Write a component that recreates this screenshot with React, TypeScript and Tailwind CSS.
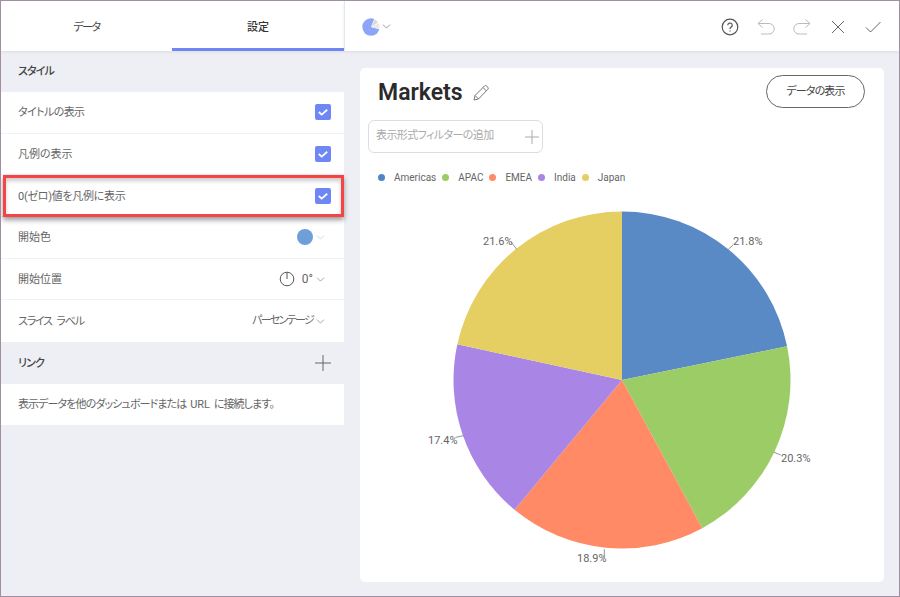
import { ChevronDown } from 'lucide-react';

const CJK = '[font-family:Roboto,"Noto_Sans_CJK_JP",sans-serif] [font-feature-settings:"palt"]';

const CX = 262;
const CY = 170;
const R = 168.5;

const slices = [
  { name: 'Americas', pct: 21.8, color: '#5a8ac6', legend: '#4f86c6' },
  { name: 'APAC', pct: 20.3, color: '#9ccc65', legend: '#9ccc65' },
  { name: 'EMEA', pct: 18.9, color: '#ff8a65', legend: '#ff8a65' },
  { name: 'India', pct: 17.4, color: '#a985e6', legend: '#a985e6' },
  { name: 'Japan', pct: 21.6, color: '#e5cf63', legend: '#e5cf63' },
];

function point(pct: number, r: number) {
  const a = (pct / 100) * Math.PI * 2;
  return [CX + Math.sin(a) * r, CY - Math.cos(a) * r];
}

function slicePath(from: number, to: number) {
  const [x1, y1] = point(from, R);
  const [x2, y2] = point(to, R);
  return `M${CX} ${CY}L${x1} ${y1}A${R} ${R} 0 0 1 ${x2} ${y2}Z`;
}

function PieChart() {
  let run = 0;
  return (
    <svg width="524" height="372" viewBox="0 0 524 372" className="mt-[26px] block">
      {slices.map((s) => {
        const d = slicePath(run, run + s.pct);
        run += s.pct;
        return <path key={s.name} d={d} fill={s.color} />;
      })}
      <g stroke="#777" strokeWidth="0.8" fill="none">
        <path d="M368.300 39.300L373 35" />
        <path d="M414 242.300L420.700 245" />
        <path d="M244.300 339.300V348" />
        <path d="M96 227.300L103.300 225.700" />
        <path d="M151 31.700L156.700 39.300" />
      </g>
      <g fontSize="11" fill="#666" fontFamily="Roboto, sans-serif">
        <text x="373" y="35">21.8%</text>
        <text x="421" y="252">20.3%</text>
        <text x="217" y="352">18.9%</text>
        <text x="68" y="234">17.4%</text>
        <text x="123" y="35">21.6%</text>
      </g>
    </svg>
  );
}

function Check() {
  return (
    <span className="flex h-[16px] w-[16px] items-center justify-center rounded-[2px] bg-[#6f87f5]">
      <svg width="12" height="12" viewBox="0 0 12 12" fill="none" stroke="#fff" strokeWidth="1.8">
        <path d="M1.800 6l2.900 2.600 5.500-4.800" />
      </svg>
    </span>
  );
}

function Row({ label, tight, children, last }: { label: string; tight?: string; children?: React.ReactNode; last?: boolean }) {
  return (
    <div className={`flex h-[41.67px] items-center justify-between bg-white pl-[17px] pr-[13px] text-[11px] text-[#666] ${last ? '' : 'border-b border-[#f1f2f6]'}`}>
      <span className={`pt-[2px] ${tight ?? ''}`}>{label}</span>
      {children}
    </div>
  );
}

function Chevron({ className }: { className?: string }) {
  return <ChevronDown size={13} strokeWidth={1.2} className={className ?? 'text-[#777]'} />;
}

function TopIcons() {
  return (
    <div className="flex items-center gap-[18px] pr-[18px]">
      <svg width="18" height="18" viewBox="0 0 18 18" fill="none" stroke="#555" strokeWidth="1.2">
        <circle cx="9" cy="9" r="7.800" />
        <path d="M6.800 7.200a2.200 2.200 0 1 1 3.400 1.900c-.8.5-1.200 1-1.200 1.900" />
        <path d="M9 12.400v1.200" />
      </svg>
      <svg width="18" height="18" viewBox="0 0 18 18" fill="none" stroke="#bbb" strokeWidth="1">
        <path d="M5.500 1.500L1 5.500l4.500 4" />
        <path d="M1 5.500h11a4.600 4.600 0 0 1 0 10.500H4" />
      </svg>
      <svg width="18" height="18" viewBox="0 0 18 18" fill="none" stroke="#bbb" strokeWidth="1">
        <path d="M12.500 1.500l4.500 4-4.500 4" />
        <path d="M17 5.500H6a4.600 4.600 0 0 0 0 10.500h8" />
      </svg>
      <svg width="14" height="14" viewBox="0 0 14 14" fill="none" stroke="#666" strokeWidth="1" className="ml-[2px]">
        <path d="M1 1l12 12M13 1L1 13" />
      </svg>
      <svg width="16" height="12" viewBox="0 0 16 12" fill="none" stroke="#666" strokeWidth="1" className="ml-[2px]">
        <path d="M1 6.500l4.500 4.500L15.500 1" />
      </svg>
    </div>
  );
}

export default function App() {
  return (
    <div className={`flex h-[597px] w-[900px] overflow-hidden border border-[#a08fa3] bg-[#eeeff4] ${CJK}`}>
      {/* left settings panel */}
      <div className="w-[343px] shrink-0">
        <div className="flex h-[49.500px] bg-white text-[11px] text-[#444] shadow-[0_1px_3px_rgba(0,0,0,0.08)]">
          <div className="flex w-[171px] items-center justify-center pt-[4px] tracking-[-1.500px]">データ</div>
          <div className="flex flex-1 items-center justify-center border-b-[3px] border-[#6f87f5] pt-[8px] font-medium text-[#333]">設定</div>
        </div>
        <div className="flex h-[41.67px] items-center pl-[17px] pt-[2px] text-[11px] font-medium tracking-[-0.900px] text-[#444]">スタイル</div>
        <Row label="タイトルの表示" tight="tracking-[-0.600px]"><Check /></Row>
        <Row label="凡例の表示"><Check /></Row>
        <div className="relative">
          <Row label="0(ゼロ)値を凡例に表示" tight="tracking-[-0.300px]"><Check /></Row>
          <div className="absolute bottom-0 left-[1.500px] right-0 top-0 border-[3px] border-[#f64444] shadow-[0_3px_5px_rgba(0,0,0,0.4),inset_0_3px_4px_rgba(0,0,0,0.2)]" />
        </div>
        <Row label="開始色">
          <div className="mr-[4px] flex items-center gap-[1px]">
            <span className="h-[16px] w-[16px] rounded-full bg-[#6f9fd8]" />
            <Chevron className="text-[#a9c4e6]" />
          </div>
        </Row>
        <Row label="開始位置">
          <div className="mr-[4px] flex items-center gap-[1px]">
            <svg width="16" height="16" viewBox="0 0 16 16" fill="none" stroke="#555" strokeWidth="1" className="mr-[6px]">
              <circle cx="8" cy="8" r="6.800" />
              <path d="M8 1.500V8" />
            </svg>
            <span className="text-[12px]">0°</span>
            <Chevron />
          </div>
        </Row>
        <Row label="スライス ラベル" tight="tracking-[-1.200px] [word-spacing:3px]" last>
          <div className="mr-[4px] flex items-center">
            <span className="mr-[1px] tracking-[-1.700px]">パーセンテージ</span>
            <Chevron />
          </div>
        </Row>
        <div className="flex h-[41.67px] items-center justify-between pl-[17px] pr-[13px] text-[11px] font-medium text-[#444]">
          <span className="pt-[2px] tracking-[-0.800px]">リンク</span>
          <svg width="16" height="16" viewBox="0 0 16 16" stroke="#666" strokeWidth="1">
            <path d="M8 0v16M0 8h16" />
          </svg>
        </div>
        <div className="flex h-[41px] items-center bg-white pl-[17px] pt-[2px] text-[11px] tracking-[-0.900px] text-[#666] [word-spacing:2px]">
          <span>表示データを他のダッシュボードまたは <span className="tracking-normal">URL</span> に接続します。</span>
        </div>
      </div>

      {/* right chart panel */}
      <div className="flex flex-1 flex-col">
        <div className="flex h-[49.500px] items-center justify-between border-l border-[#e6e7ec] bg-white pl-[17px] pt-[2px] shadow-[0_1px_3px_rgba(0,0,0,0.08)]">
          <div className="flex items-center">
            <svg width="20" height="18" viewBox="0 0 18 18" className="h-[18px] w-[18px]">
              <circle cx="9" cy="9" r="8.700" fill="#8ea4f8" />
              <path d="M9 9L12.500 0.300A9.500 9.500 0 0 1 18 11.500Z" fill="#fff" />
              <path d="M9.500 9L12.800 1.400A8.300 8.300 0 0 1 16 4.300Z" fill="#d9d9d9" />
              <path d="M9.800 9.300L16.300 4.900A8.300 8.300 0 0 1 17.400 10.800Z" fill="#e9e9e9" />
            </svg>
            <Chevron className="text-[#666]" />
          </div>
          <TopIcons />
        </div>
        <div className="ml-[16px] mr-[15px] mt-[17.500px] rounded-[5px] bg-white">
          <div className="flex items-start justify-between pl-[18px] pr-[19px] pt-[7px]">
            <div className="-mb-[1px] flex items-center gap-[9px] pt-[2px]">
              <span className="text-[23px] font-semibold leading-[32px] text-[#2b2b2b]">Markets</span>
              <svg width="18" height="18" viewBox="0 0 18 18" fill="none" stroke="#777" strokeWidth="1">
                <path d="M2 16l1-4.500L12.500 2a1.500 1.500 0 0 1 2.100 0l1.200 1.200a1.500 1.500 0 0 1 0 2.100L6.500 15z" />
                <path d="M11 3.500l3.500 3.500M3 11.500L6.500 15" />
              </svg>
            </div>
            <button className="h-[33px] w-[99px] rounded-full border border-[#666] pt-[1px] text-[11px] tracking-[-0.800px] text-[#444]">データの表示</button>
          </div>
          <div className="ml-[8px] mt-[12px] flex h-[33px] w-[175px] items-center justify-between rounded-[6px] border border-[#ddd] pl-[7px] pr-[3px] text-[11px] text-[#aaa]">
            <span className="tracking-[-0.600px]">表示形式フィルターの追加</span>
            <svg width="14" height="14" viewBox="0 0 14 14" stroke="#aaa" strokeWidth="1">
              <path d="M7 0v14M0 7h14" />
            </svg>
          </div>
          <div className="ml-[18px] mt-[17px] flex h-[14px] items-center gap-[6px] text-[10px] text-[#666]">
            {slices.map((s) => (
              <div key={s.name} className="flex items-center gap-[9px]">
                <span className="h-[7px] w-[7px] rounded-full" style={{ backgroundColor: s.legend }} />
                <span>{s.name}</span>
              </div>
            ))}
          </div>
          <PieChart />
        </div>
      </div>
    </div>
  );
}
